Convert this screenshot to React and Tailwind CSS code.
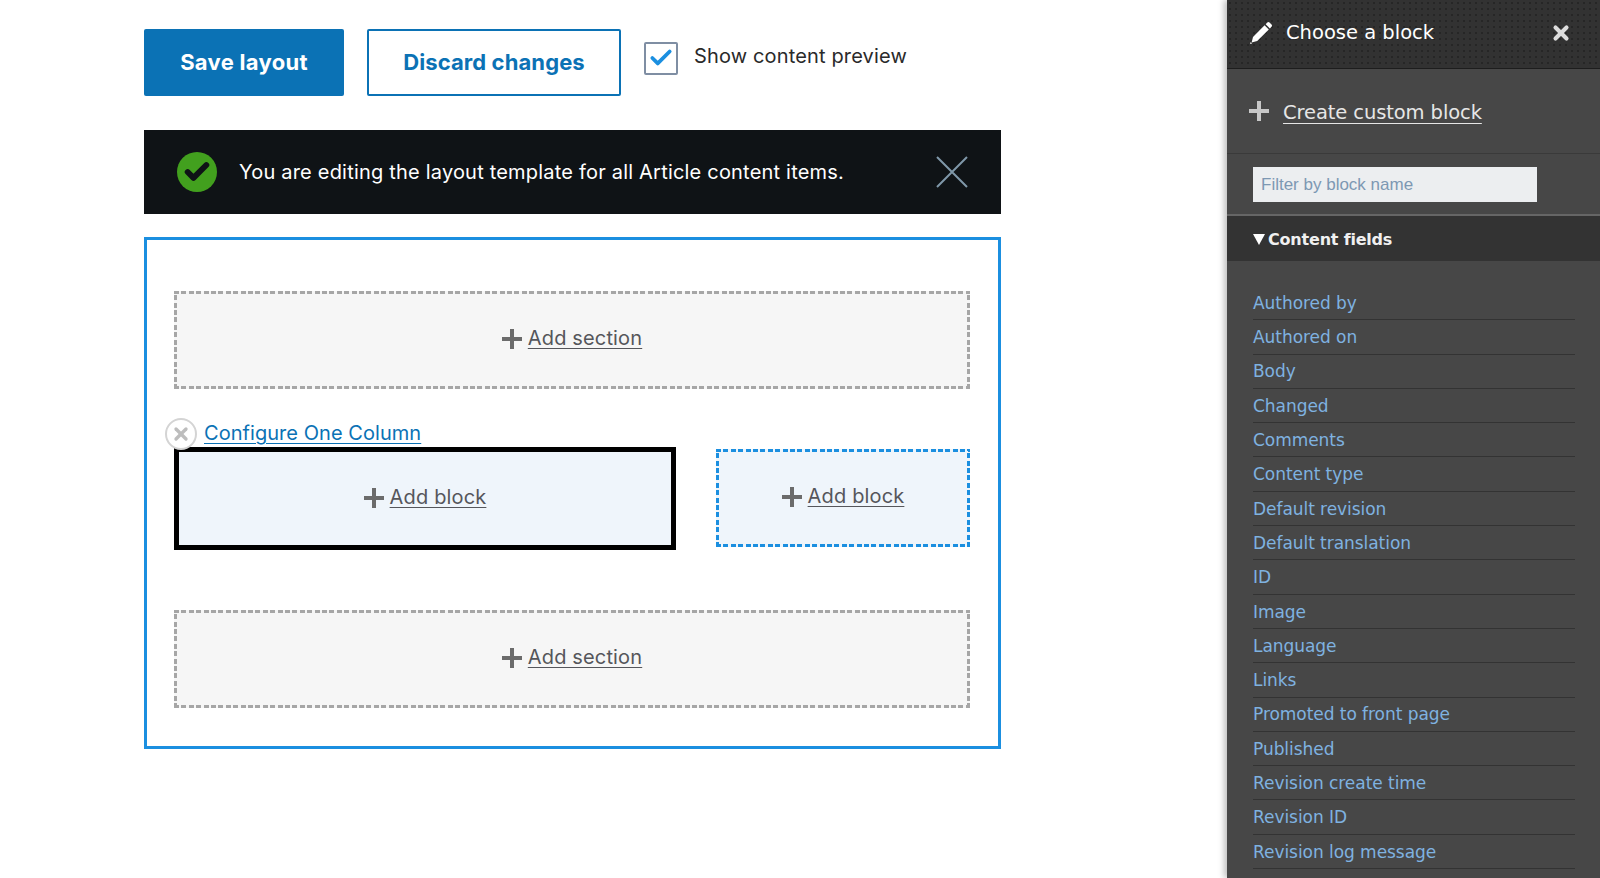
import React from "react";
import { Check, X } from "lucide-react";

const fields = [
    "Authored by",
    "Authored on",
    "Body",
    "Changed",
    "Comments",
    "Content type",
    "Default revision",
    "Default translation",
    "ID",
    "Image",
    "Language",
    "Links",
    "Promoted to front page",
    "Published",
    "Revision create time",
    "Revision ID",
    "Revision log message",
];

const greyDashes =
    "bg-[repeating-linear-gradient(90deg,#a6a6a6_0_5px,transparent_5px_7.4px),repeating-linear-gradient(90deg,#a6a6a6_0_5px,transparent_5px_7.4px),repeating-linear-gradient(0deg,#a6a6a6_0_5px,transparent_5px_7.4px),repeating-linear-gradient(0deg,#a6a6a6_0_5px,transparent_5px_7.4px)] bg-[size:100%_3px,100%_3px,3px_100%,3px_100%] bg-[position:top,bottom,left,right] bg-no-repeat bg-[#f6f6f6]";
const blueDashes =
    "bg-[repeating-linear-gradient(90deg,#1b8fe0_0_5px,transparent_5px_7.4px),repeating-linear-gradient(90deg,#1b8fe0_0_5px,transparent_5px_7.4px),repeating-linear-gradient(0deg,#1b8fe0_0_5px,transparent_5px_7.4px),repeating-linear-gradient(0deg,#1b8fe0_0_5px,transparent_5px_7.4px)] bg-[size:100%_3px,100%_3px,3px_100%,3px_100%] bg-[position:top,bottom,left,right] bg-no-repeat bg-[#eff5fb]";

const PlusIcon = ({ color, className }) => (
    <svg width="20" height="20" viewBox="0 0 20 20" className={className}>
        <path d="M0 10h20M10 0v20" stroke={color} strokeWidth="4" />
    </svg>
);

const AddLink = ({ label }) => (
    <a href="#" className="flex items-center gap-[6px] pb-[4px] text-[20px] tracking-[0.15px] text-[#55565b]">
        <PlusIcon color="#6b6b6b" className="mt-[2px]" />
        <span className="underline underline-offset-[3px] decoration-1">{label}</span>
    </a>
);

const App = () => {
    return (
        <div className="flex h-[878px] w-[1600px] overflow-hidden bg-white font-['Inter',sans-serif]">
            <main className="w-[1227px] shrink-0 pl-[144px] pt-[29px]">
                <div className="flex items-start">
                    <button className="h-[67px] w-[200px] rounded-[2px] bg-[#0b72b5] text-[22px] font-bold tracking-[0.3px] text-white">
                        Save layout
                    </button>
                    <button className="ml-[23px] h-[67px] w-[254px] rounded-[2px] border-2 border-[#0b72b5] bg-white text-[22px] font-bold tracking-[0.1px] text-[#0b72b5]">
                        Discard changes
                    </button>
                    <div className="ml-[23px] mt-[12px] flex items-center">
                        <span className="flex h-[33px] w-[34px] items-center justify-center rounded-[2px] border-2 border-[#7f8ea3] bg-white">
                            <Check size={26} strokeWidth={3.5} className="text-[#1b8fe0]" />
                        </span>
                        <span className="ml-[16px] pb-[4px] text-[20px] tracking-[0.15px] text-[#2a2a2a]">Show content preview</span>
                    </div>
                </div>

                <div className="mt-[34px] flex h-[84px] w-[857px] items-center bg-[#0f1316] pl-[33px] pr-[33px]">
                    <span className="flex h-10 w-10 items-center justify-center rounded-full bg-[#42a01e]">
                        <Check size={28} strokeWidth={5} className="text-[#0f1316]" />
                    </span>
                    <p className="ml-[22px] flex-1 pb-[1px] text-[20px] tracking-[0.2px] text-white">
                        You are editing the layout template for all Article content items.
                    </p>
                    <svg width="32" height="32" viewBox="0 0 32 32">
                        <path d="M1 1l30 30M31 1L1 31" stroke="#7f98a9" strokeWidth="2" />
                    </svg>
                </div>

                <div className="mt-[23px] h-[512px] w-[857px] border-[3px] border-[#1b8fe0] pl-[27px] pr-[28px] pt-[51px]">
                    <div className={`flex h-[98px] items-center justify-center ${greyDashes}`}>
                        <AddLink label="Add section" />
                    </div>
                    <div className="relative mt-[29px] flex h-[29px] items-center pl-[30px]">
                        <span className="absolute left-[-9px] top-0 flex h-8 w-8 items-center justify-center rounded-full border-2 border-[#d4d4d4] bg-white">
                            <X size={20} strokeWidth={4} className="text-[#bdbdbd]" />
                        </span>
                        <a href="#" className="text-[20px] tracking-[0.05px] text-[#0b72b5] underline underline-offset-[3px] decoration-1">
                            Configure One Column
                        </a>
                    </div>
                    <div className="flex items-start justify-between">
                        <div className="flex h-[103px] w-[502px] items-center justify-center border-[5px] border-black bg-[#eff5fb]">
                            <AddLink label="Add block" />
                        </div>
                        <div className={`mt-[2px] flex h-[98px] w-[254px] items-center justify-center ${blueDashes}`}>
                            <AddLink label="Add block" />
                        </div>
                    </div>
                    <div className={`mt-[60px] flex h-[98px] items-center justify-center ${greyDashes}`}>
                        <AddLink label="Add section" />
                    </div>
                </div>
            </main>

            <aside className="flex-1 bg-[#474747] font-['DejaVu_Sans',sans-serif] shadow-[-3px_0_6px_rgba(0,0,0,0.25)]">
                <header className="flex h-[69px] items-center border-b border-[#1d1d1d] bg-[#323232] bg-[radial-gradient(#262626_0.8px,transparent_1px)] bg-[size:6px_6px] pb-[2px] pl-[22px] pr-[28px] text-white">
                    <svg width="24" height="24" viewBox="0 0 24 24" fill="white">
                        <path d="M18.3 1.6a1.6 1.6 0 0 1 2.2 0l2 2a1.6 1.6 0 0 1 0 2.2l-1.6 1.6-4.2-4.2z" />
                        <path d="M15.6 4.3l4.2 4.2L8.2 20.1 2.6 21.5 4 15.900z" />
                        <path d="M1.700 21l1.400 1.400-2.100.7z" />
                    </svg>
                    <h2 className="ml-[13px] flex-1 text-[19.5px]">Choose a block</h2>
                    <X size={22} strokeWidth={4.5} className="text-[#dcdcdc]" />
                </header>
                <div className="flex h-[85px] items-center border-b border-[#3a3a3a] pl-[22px]">
                    <PlusIcon color="#c8c8c8" />
                    <a href="#" className="ml-[14px] pt-[4px] text-[19.5px] tracking-[-0.1px] text-[#e6e6e6] underline underline-offset-[4px] decoration-1">
                        Create custom block
                    </a>
                </div>
                <div className="h-[62px] border-b-2 border-[#666666] pl-[26px] pt-[13px]">
                    <input
                        placeholder="Filter by block name"
                        className="h-[35px] w-[284px] bg-[#eceef0] px-[8px] font-['Liberation_Sans',sans-serif] text-[17px] placeholder:text-[#7d98b3]"
                    />
                </div>
                <div className="flex h-[45px] items-center bg-[#333333] pl-[26px] pt-[2px] text-[16px] font-bold tracking-[-0.2px] text-[#f0f0f0]">
                    <svg width="12" height="11" viewBox="0 0 12 11" className="mr-[3px]">
                        <path d="M0 0h12L6 11z" fill="white" />
                    </svg>
                    Content fields
                </div>
                <ul className="ml-[26px] mr-[25px] mt-[25px]">
                    {fields.map((field) => (
                        <li key={field} className="flex h-[34.3px] items-center border-b border-[#333333] pt-[2px] text-[17px] tracking-[-0.05px] text-[#7fb2e0]">
                            {field}
                        </li>
                    ))}
                </ul>
            </aside>
        </div>
    );
};

export default App;
